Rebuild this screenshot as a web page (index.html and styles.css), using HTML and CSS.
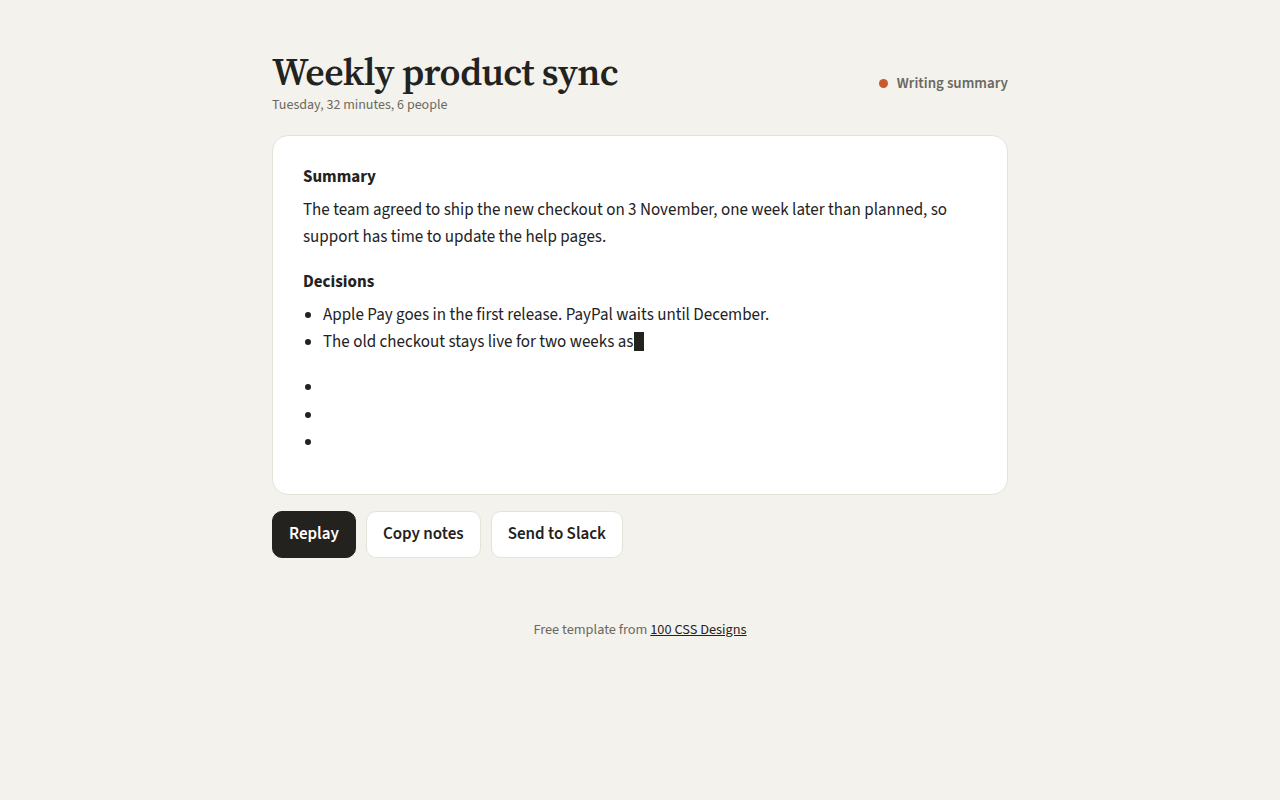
FILE: index.html
```html
<!DOCTYPE html>
<html lang="en">
<head>
<meta charset="utf-8">
<title>Weekly product sync</title>
<link rel="stylesheet" href="styles.css">
</head>
<body>
<main class="page">
  <header class="head">
    <div class="head-main">
      <h1 class="title">Weekly product sync</h1>
      <p class="meta">Tuesday, 32 minutes, 6 people</p>
    </div>
    <div class="status"><span class="dot"></span>Writing summary</div>
  </header>
  <section class="card">
    <h2 class="h">Summary</h2>
    <p class="para">The team agreed to ship the new checkout on 3 November, one week later than planned, so support has time to update the help pages.</p>
    <h2 class="h h-second">Decisions</h2>
    <ul class="list">
      <li>Apple Pay goes in the first release. PayPal waits until December.</li>
      <li>The old checkout stays live for two weeks as<span class="cursor"></span></li>
    </ul>
    <ul class="list list-pending">
      <li></li>
      <li></li>
      <li></li>
    </ul>
  </section>
  <div class="actions">
    <button class="btn btn-dark">Replay</button>
    <button class="btn">Copy notes</button>
    <button class="btn">Send to Slack</button>
  </div>
  <footer class="foot">Free template from <a href="#">100 CSS Designs</a></footer>
</main>
</body>
</html>
```
FILE: styles.css
```css
* { box-sizing: border-box; }
html, body { margin: 0; padding: 0; }
body {
  background: #f4f2ed;
  color: #23221e;
  font-family: "Source Sans 3", "Source Sans Pro", "Noto Sans", "Liberation Sans", sans-serif;
}
.page {
  width: 736px;
  margin: 0 auto;
  padding-top: 50px;
}
.head {
  display: flex;
  align-items: center;
  justify-content: space-between;
}
.title {
  margin: 0;
  font-family: "Source Serif 4", "Source Serif Pro", "Liberation Serif", "DejaVu Serif", serif;
  font-weight: 600;
  font-size: 37.8px;
  line-height: 44px;
  letter-spacing: -0.5px;
}
.meta {
  margin: 2px 0 0;
  font-size: 14px;
  line-height: 18px;
  color: #6b6860;
}
.status {
  display: flex;
  align-items: center;
  gap: 9px;
  font-size: 15px;
  font-weight: 600;
  color: #6b6860;
  margin-top: 2px;
}
.dot {
  width: 9px;
  height: 9px;
  border-radius: 50%;
  background: #c8582e;
}
.card {
  margin-top: 21px;
  background: #fff;
  border: 1px solid #e5e2da;
  border-radius: 16px;
  padding: 29px 30px 37px;
}
.h {
  margin: 0;
  font-size: 17px;
  line-height: 24px;
  font-weight: 700;
}
.h-second { margin-top: 19px; }
.para {
  margin: 8px 0 0;
  font-size: 17px;
  line-height: 27px;
}
.list {
  margin: 8px 0 0;
  padding-left: 20px;
  font-size: 17px;
  line-height: 27px;
}
.list-pending { margin-top: 18px; }
.list-pending li { height: 27.5px; }
.cursor {
  display: inline-block;
  width: 10px;
  height: 19px;
  background: #23221e;
  vertical-align: -4px;
  margin-left: 1px;
}
.actions {
  display: flex;
  gap: 10px;
  margin-top: 16px;
}
.btn {
  font-family: inherit;
  font-size: 17px;
  font-weight: 600;
  color: #23221e;
  background: #fff;
  border: 1px solid #e5e2da;
  border-radius: 10px;
  height: 47px;
  padding: 0 16px;
  cursor: pointer;
}
.btn-dark {
  background: #23221e;
  border-color: #23221e;
  color: #fff;
}
.foot {
  margin-top: 61px;
  text-align: center;
  font-size: 14.3px;
  color: #6b6860;
}
.foot a { color: #23221e; }
```
